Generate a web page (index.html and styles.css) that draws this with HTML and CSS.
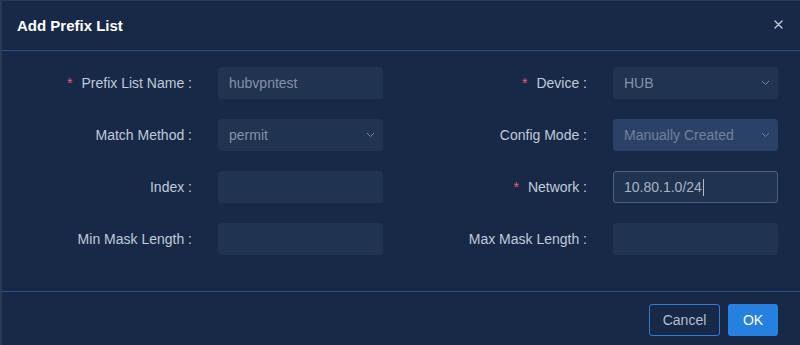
FILE: index.html
```html
<!DOCTYPE html>
<html lang="en">
<head>
    <meta charset="UTF-8">
    <meta name="viewport" content="width=device-width, initial-scale=1.0">
    <title>Add Prefix List</title>
    <link rel="stylesheet" href="styles.css">
</head>
<body>
    <div class="modal">
        <!-- Header -->
        <div class="modal-header">
            <span class="modal-title">Add Prefix List</span>
            <span class="modal-close">
                <svg width="9" height="9" viewBox="0 0 9 9"><path d="M1 1L8 8M8 1L1 8" stroke="#c3cad8" stroke-width="1.4" stroke-linecap="round"/></svg>
            </span>
        </div>

        <!-- Form -->
        <div class="modal-body">
            <div class="field">
                <label class="field-label"><span class="req">*</span>Prefix List Name :</label>
                <div class="control"><span class="value">hubvpntest</span></div>
            </div>
            <div class="field">
                <label class="field-label"><span class="req">*</span>Device :</label>
                <div class="control select"><span class="value">HUB</span><span class="arrow"><svg width="9" height="6" viewBox="0 0 9 6"><path d="M1 1L4.5 4.5L8 1" fill="none" stroke="#7d8ba3" stroke-width="1"/></svg></span></div>
            </div>

            <div class="field">
                <label class="field-label">Match Method :</label>
                <div class="control select"><span class="value">permit</span><span class="arrow"><svg width="9" height="6" viewBox="0 0 9 6"><path d="M1 1L4.5 4.5L8 1" fill="none" stroke="#7d8ba3" stroke-width="1"/></svg></span></div>
            </div>
            <div class="field">
                <label class="field-label">Config Mode :</label>
                <div class="control select disabled"><span class="value">Manually Created</span><span class="arrow"><svg width="9" height="6" viewBox="0 0 9 6"><path d="M1 1L4.5 4.5L8 1" fill="none" stroke="#6c7d99" stroke-width="1"/></svg></span></div>
            </div>

            <div class="field">
                <label class="field-label">Index :</label>
                <div class="control"></div>
            </div>
            <div class="field">
                <label class="field-label"><span class="req">*</span>Network :</label>
                <div class="control focused"><span class="value">10.80.1.0/24</span><span class="caret"></span></div>
            </div>

            <div class="field">
                <label class="field-label">Min Mask Length :</label>
                <div class="control"></div>
            </div>
            <div class="field">
                <label class="field-label">Max Mask Length :</label>
                <div class="control"></div>
            </div>
        </div>

        <!-- Footer -->
        <div class="modal-footer">
            <button class="btn btn-cancel">Cancel</button>
            <button class="btn btn-ok">OK</button>
        </div>
    </div>
</body>
</html>
```

FILE: styles.css
```css
body {
    margin: 0;
    padding: 1px 0 0 2px;
    background-color: #2b3a52;
    font-family: "Liberation Sans", Arial, sans-serif;
    font-size: 14px;
    overflow: hidden;
    height: 344px;
}
.modal {
    width: 798px;
    height: 360px;
    background-color: #172946;
    box-sizing: border-box;
}
.modal-header {
    height: 49px;
    border-bottom: 1px solid #2d5186;
    display: flex;
    align-items: center;
    justify-content: space-between;
    padding: 0 17px 0 15px;
}
.modal-title {
    color: #ffffff;
    font-weight: bold;
    font-size: 15px;
    margin-top: -1px;
}
.modal-close {
    display: flex;
    margin-top: -2px;
}
.modal-body {
    display: grid;
    grid-template-columns: 395px 395px;
    row-gap: 20px;
    padding: 16px 0 36px 0;
}
.field {
    display: flex;
    align-items: center;
}
.field-label {
    width: 190px;
    text-align: right;
    color: #c2cad8;
    margin-right: 26px;
}
.req {
    color: #f5586e;
    margin-right: 9px;
}
.control {
    width: 165px;
    height: 32px;
    box-sizing: border-box;
    background-color: #20334f;
    border: 1px solid #20334f;
    border-radius: 3px;
    display: flex;
    align-items: center;
    padding: 0 10px;
    color: #8592a8;
}
.control.select {
    justify-content: space-between;
}
.control.disabled {
    background-color: #2b4268;
    border-color: #2b4268;
    color: #71819c;
}
.control.focused {
    border-color: #4b6287;
    color: #aab3c3;
}
.caret {
    width: 1px;
    height: 17px;
    background-color: #b3bccb;
    margin-left: 1px;
}
.arrow {
    display: flex;
    margin-right: -3px;
}
.modal-footer {
    border-top: 1px solid #2d5186;
    display: flex;
    justify-content: flex-end;
    gap: 8px;
    padding: 12px 22px 0 0;
}
.btn {
    height: 32px;
    border-radius: 3px;
    font-family: "Liberation Sans", Arial, sans-serif;
    font-size: 14px;
    cursor: pointer;
}
.btn-cancel {
    width: 71px;
    background-color: transparent;
    border: 1px solid #2a7fd9;
    color: #b5bfcf;
}
.btn-ok {
    width: 50px;
    background-color: #2580e0;
    border: none;
    color: #ffffff;
}
```
